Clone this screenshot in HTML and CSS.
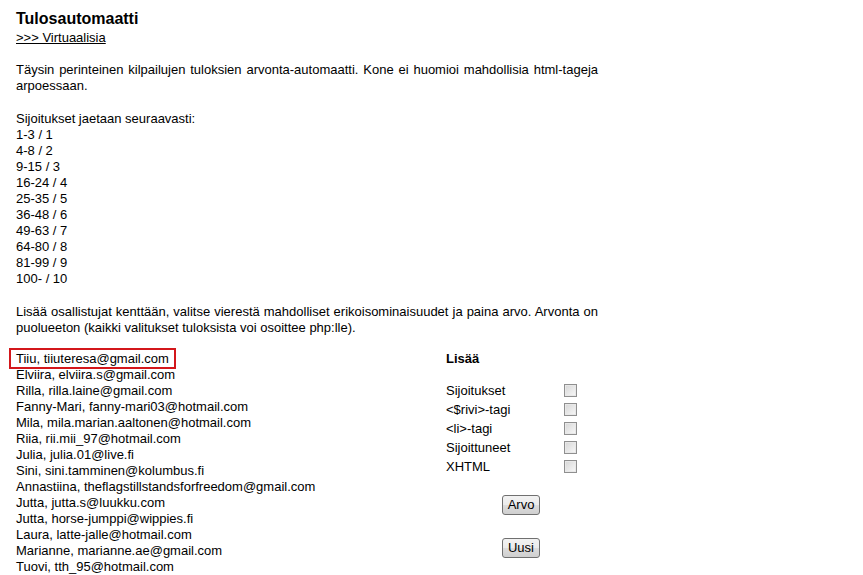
FILE: index.html
```html
<!DOCTYPE html>
<html>
  <head>
    <meta charset="UTF-8">
    <title>Tulosautomaatti</title>
    <link rel="stylesheet" href="styles.css">
  </head>
  <body>
    <div class="page">
      <h1>Tulosautomaatti</h1>
      <a class="back" href="#">&gt;&gt;&gt; Virtuaalisia</a>

      <p class="text intro">Täysin perinteinen kilpailujen tuloksien arvonta-automaatti. Kone ei huomioi mahdollisia html-tageja arpoessaan.</p>

      <p class="text">Sijoitukset jaetaan seuraavasti:<br>
        1-3 / 1<br>
        4-8 / 2<br>
        9-15 / 3<br>
        16-24 / 4<br>
        25-35 / 5<br>
        36-48 / 6<br>
        49-63 / 7<br>
        64-80 / 8<br>
        81-99 / 9<br>
        100- / 10</p>

      <p class="text">Lisää osallistujat kenttään, valitse vierestä mahdolliset erikoisominaisuudet ja paina arvo. Arvonta on puolueeton (kaikki valitukset tuloksista voi osoittee php:lle).</p>

      <div class="form">
        <div class="entries">
          <div class="entry marked">Tiiu, tiiuteresa@gmail.com</div>
          <div class="entry">Elviira, elviira.s@gmail.com</div>
          <div class="entry">Rilla, rilla.laine@gmail.com</div>
          <div class="entry">Fanny-Mari, fanny-mari03@hotmail.com</div>
          <div class="entry">Mila, mila.marian.aaltonen@hotmail.com</div>
          <div class="entry">Riia, rii.mii_97@hotmail.com</div>
          <div class="entry">Julia, julia.01@live.fi</div>
          <div class="entry">Sini, sini.tamminen@kolumbus.fi</div>
          <div class="entry">Annastiina, theflagstillstandsforfreedom@gmail.com</div>
          <div class="entry">Jutta, jutta.s@luukku.com</div>
          <div class="entry">Jutta, horse-jumppi@wippies.fi</div>
          <div class="entry">Laura, latte-jalle@hotmail.com</div>
          <div class="entry">Marianne, marianne.ae@gmail.com</div>
          <div class="entry">Tuovi, tth_95@hotmail.com</div>
        </div>

        <div class="options">
          <div class="options-title">Lisää</div>
          <label class="option"><span>Sijoitukset</span><input type="checkbox"></label>
          <label class="option"><span>&lt;$rivi&gt;-tagi</span><input type="checkbox"></label>
          <label class="option"><span>&lt;li&gt;-tagi</span><input type="checkbox"></label>
          <label class="option"><span>Sijoittuneet</span><input type="checkbox"></label>
          <label class="option"><span>XHTML</span><input type="checkbox"></label>
          <div class="actions">
            <button class="btn">Arvo</button>
            <button class="btn">Uusi</button>
          </div>
        </div>
      </div>
    </div>
  </body>
</html>
```

FILE: styles.css
```css
body {
  margin: 0;
  background-color: #fff;
  color: #000;
  font-family: "Liberation Sans", Arial, sans-serif;
  font-size: 13px;
  line-height: 16px;
}

.page {
  padding: 10px 0 0 16px;
  width: 582px;
}

h1 {
  margin: 0;
  font-size: 16px;
  line-height: 18px;
  font-weight: bold;
}

.back {
  display: block;
  margin-top: 2px;
  color: #000;
  text-decoration: underline;
}

.text {
  margin: 17px 0 0 0;
  text-align: justify;
}

.intro {
  margin-top: 16px;
}

.form {
  display: flex;
  margin-top: 15px;
}

.entries {
  width: 430px;
}

.entry {
  white-space: nowrap;
}

.marked {
  position: relative;
}

.marked::after {
  content: "";
  position: absolute;
  left: -7px;
  top: -3px;
  width: 163px;
  height: 17px;
  border: 2px solid #d3171b;
}

.options {
  width: 150px;
}

.options-title {
  font-weight: bold;
  margin-bottom: 14px;
}

.option {
  display: flex;
  align-items: center;
  height: 19px;
}

.option span {
  width: 118px;
}

.option input {
  appearance: none;
  -webkit-appearance: none;
  width: 13px;
  height: 13px;
  margin: 0;
  border: 1px solid #8f8f8f;
  background: linear-gradient(135deg, #d6d6d6, #f8f8f8);
  box-shadow: inset 0 0 0 1px #e8e8e8;
}

.actions {
  display: flex;
  flex-direction: column;
  align-items: center;
  gap: 23px;
  margin-top: 19px;
}

.btn {
  font-family: "Liberation Sans", Arial, sans-serif;
  font-size: 13px;
  line-height: 15px;
  padding: 1px 5px 2px 5px;
  color: #000;
  border: 1px solid #707070;
  border-radius: 3px;
  background: linear-gradient(#f2f2f2 0%, #ebebeb 50%, #dddddd 51%, #cfcfcf 100%);
}
```
